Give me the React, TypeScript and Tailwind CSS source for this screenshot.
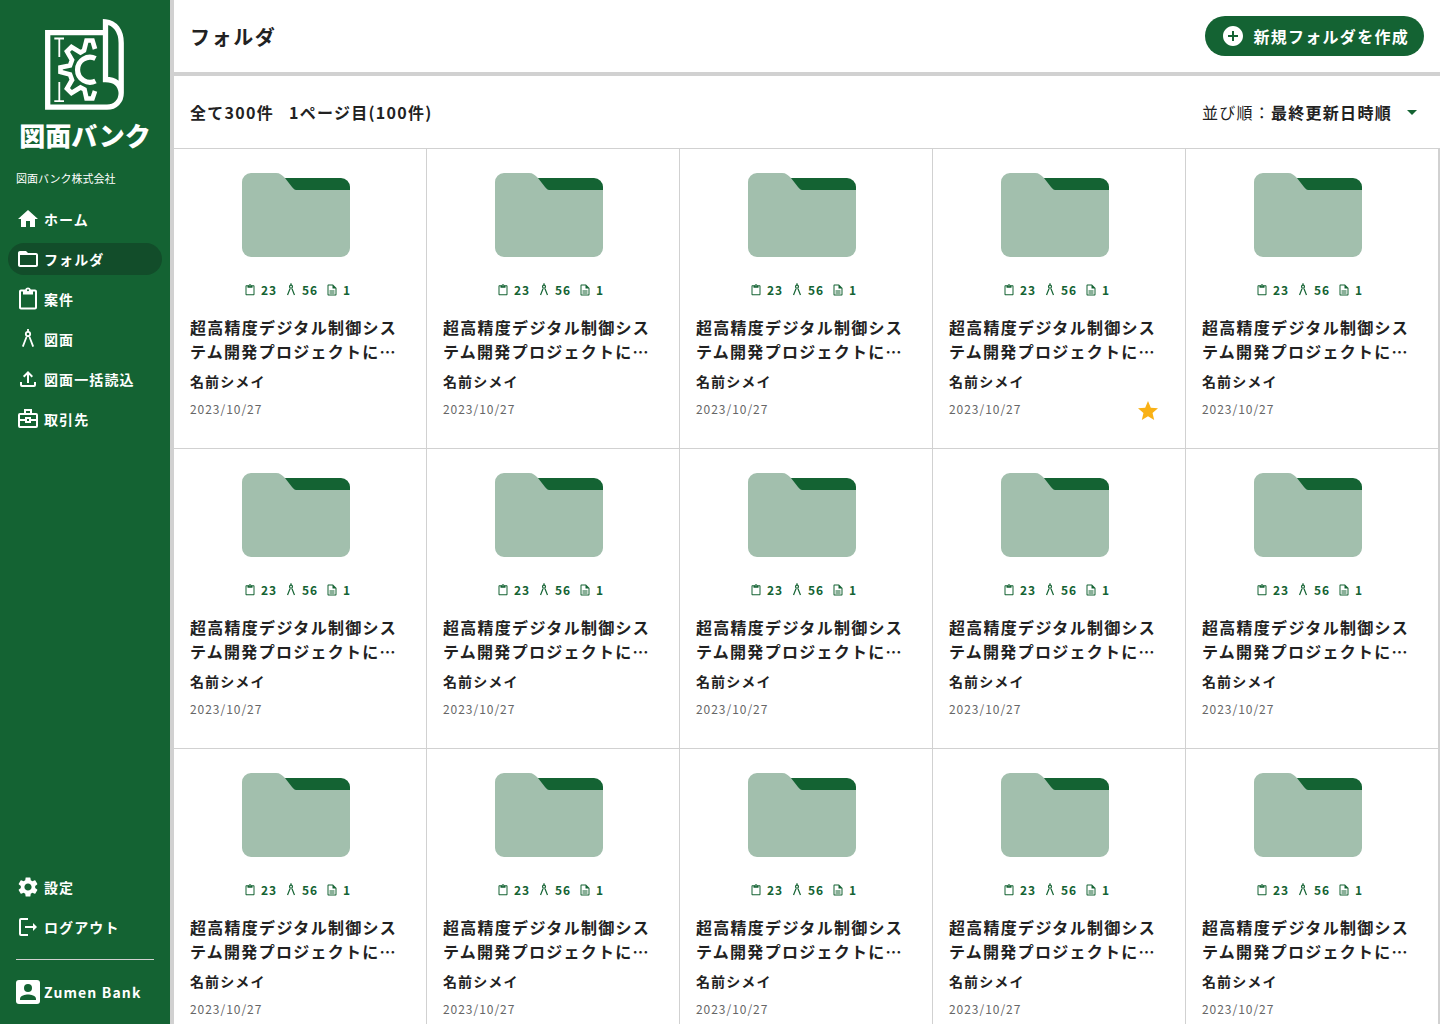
import type { ComponentType } from "react";
import { MdHome, MdSettings, MdAddCircle, MdArrowDropDown, MdStar } from "react-icons/md";

interface IconProps {
  className?: string;
}

function FolderIcon({ className }: IconProps) {
  return (
    <svg viewBox="0 0 24 24" fill="currentColor" className={className} aria-hidden="true">
      <path d="M10 4H4c-1.100 0-2 .9-2 2v12c0 1.100.9 2 2 2h16c1.100 0 2-.9 2-2V8c0-1.100-.9-2-2-2h-8l-2-2Zm10 14H4V8h16v10Z" />
    </svg>
  );
}

function ClipboardIcon({ className }: IconProps) {
  return (
    <svg viewBox="0 0 24 24" fill="currentColor" className={className} aria-hidden="true">
      <path d="M19 2.500h-4.180C14.400 1.300 13.300.5 12 .5s-2.400.8-2.820 2H5c-1.100 0-2 .9-2 2v16c0 1.100.9 2 2 2h14c1.100 0 2-.9 2-2v-16c0-1.100-.9-2-2-2Zm-7-.2a1 1 0 1 1 0 2 1 1 0 0 1 0-2ZM19 20.500H5v-16h2v3h10v-3h2v16Z" />
    </svg>
  );
}

function CompassIcon({ className }: IconProps) {
  return (
    <svg viewBox="0 0 24 24" fill="none" stroke="currentColor" strokeWidth="1.8" className={className} aria-hidden="true">
      <circle cx="12" cy="7" r="2.2" />
      <path d="M12 2v3M10.500 10 6.800 19.600M13.500 10l3.700 9.600" />
    </svg>
  );
}

function UploadIcon({ className }: IconProps) {
  return (
    <svg viewBox="0 0 24 24" fill="none" stroke="currentColor" strokeWidth="2" className={className} aria-hidden="true">
      <path d="M12 16V5.500M7.700 9.700 12 5.400l4.300 4.300" />
      <path d="M5 15v3a1 1 0 0 0 1 1h12a1 1 0 0 0 1-1v-3" />
    </svg>
  );
}

function DocumentIcon({ className }: IconProps) {
  return (
    <svg viewBox="0 0 24 24" fill="currentColor" className={className} aria-hidden="true">
      <path d="M14 1H5c-1.100 0-2 .9-2 2v18c0 1.100.9 2 2 2h14c1.100 0 2-.9 2-2V8l-7-7ZM5 21V3h8v6h6v12H5Zm2-8h10v2H7v-2Zm0 4h10v2H7v-2Z" />
    </svg>
  );
}

function BriefcaseIcon({ className }: IconProps) {
  return (
    <svg viewBox="0 0 24 24" fill="none" stroke="currentColor" strokeWidth="2" className={className} aria-hidden="true">
      <rect x="3" y="7" width="18" height="13" rx="1" />
      <path d="M9 7V3h6v4M3 13h7M14 13h7" />
      <rect x="10" y="11" width="4" height="4" />
    </svg>
  );
}

function LogoutIcon({ className }: IconProps) {
  return (
    <svg viewBox="0 0 24 24" fill="none" stroke="currentColor" strokeWidth="2" className={className} aria-hidden="true">
      <path d="M12 4H5a1 1 0 0 0-1 1v14a1 1 0 0 0 1 1h7M9 12h9" />
      <path d="M17 8l4 4-4 4z" fill="currentColor" stroke="none" />
    </svg>
  );
}

function AccountIcon({ className }: IconProps) {
  return (
    <svg viewBox="0 0 24 24" className={className} aria-hidden="true">
      <rect width="24" height="24" rx="3" fill="currentColor" />
      <circle cx="12" cy="8" r="4" fill="#146333" />
      <path d="M4 20v-1.300c0-2.700 5.300-4.100 8-4.100s8 1.400 8 4.100V20z" fill="#146333" />
    </svg>
  );
}

function FolderArt() {
  return (
    <svg viewBox="0 0 108 84" className="h-[84px] w-[108px]" aria-hidden="true">
      <path d="M36 5h63a9 9 0 0 1 9 9v12H36z" fill="#146333" />
      <path d="M9 0h25c4 0 6 2 9 5l7 9c2 2 2 3 5 3h53v58a9 9 0 0 1-9 9H9a9 9 0 0 1-9-9V9a9 9 0 0 1 9-9z" fill="#a2bfad" />
    </svg>
  );
}

function LogoMark() {
  return (
    <svg viewBox="45 18 81 93" className="h-[93px] w-[81px]" fill="none" stroke="#fff" aria-hidden="true">
      <path d="M105 32.700H47.700V107.200H107C115.500 107.200 121.200 101 121.200 93V43C121.200 31 115 22.500 105.500 21.800V79.500C115 79.500 120.500 84 121.200 93" strokeWidth="5.3" />
      <path d="M95 49 92.500 40.500H86.500L84 50.500 80.500 52.500 71.500 47 67 51.500 72 60 70 65.500 60.500 67.500V72L70 74.500 72 80 67 88.500 71.500 93 80.500 87.500 84.500 89.500 86.500 98.500H92.500L95 91" strokeWidth="4.700" />
      <path d="M95.500 58.500A12.500 12.500 0 1 0 95.500 81" strokeWidth="5.200" />
      <path d="M54.300 38.500H64M59.300 38.500V57M54.300 101.200H64M59.300 101.200V82" strokeWidth="1.8" />
    </svg>
  );
}

const mainNav = [
  { label: "ホーム", icon: MdHome },
  { label: "フォルダ", icon: FolderIcon, active: true },
  { label: "案件", icon: ClipboardIcon },
  { label: "図面", icon: CompassIcon },
  { label: "図面一括読込", icon: UploadIcon },
  { label: "取引先", icon: BriefcaseIcon },
];

const subNav = [
  { label: "設定", icon: MdSettings },
  { label: "ログアウト", icon: LogoutIcon },
];

const folders = Array.from({ length: 15 }, (_, i) => ({
  id: i,
  name: "超高精度デジタル制御システム開発プロジェクトに…",
  owner: "名前シメイ",
  date: "2023/10/27",
  projects: 23,
  drawings: 56,
  documents: 1,
  starred: i === 3,
}));

function NavItem({ label, icon: Icon, active }: { label: string; icon: ComponentType<IconProps>; active?: boolean }) {
  return (
    <a href="#" className={`flex h-8 items-center gap-1 rounded-full px-2 text-sm font-bold tracking-[0.08em] ${active ? "bg-[#124d2a]" : ""}`}>
      <Icon className="size-6 shrink-0" />
      {label}
    </a>
  );
}

function FolderCard({ folder }: { folder: (typeof folders)[number] }) {
  return (
    <a href="#" className="flex h-[300px] flex-col border-r border-b border-[#d1d1d1] pt-6 pr-[25px] pl-4">
      <div className="flex justify-center"><FolderArt /></div>
      <div className="mt-6 flex h-[18px] items-center justify-center gap-2 pl-1 text-xs font-bold tracking-[0.08em] text-[#146333]">
        <span className="flex items-center gap-[5px]"><ClipboardIcon className="size-3" />{folder.projects}</span>
        <span className="flex items-center gap-[5px]"><CompassIcon className="-mx-0.5 size-4" />{folder.drawings}</span>
        <span className="flex items-center gap-[5px]"><DocumentIcon className="size-3" />{folder.documents}</span>
      </div>
      <h2 className="mt-4 text-base leading-6 font-bold tracking-[0.08em]">{folder.name}</h2>
      <p className="mt-2 text-sm leading-5 font-bold tracking-[0.08em]">{folder.owner}</p>
      <div className="flex items-start justify-between">
        <time className="mt-2.5 text-xs tracking-[0.08em] text-[#666]">{folder.date}</time>
        {folder.starred && <MdStar className="mt-2 size-6 text-[#f9b115]" />}
      </div>
    </a>
  );
}

export default function App() {
  return (
    <div className="flex h-screen overflow-hidden bg-white font-['Noto_Sans_CJK_JP',sans-serif] text-[#222]">
      <aside className="flex w-[174px] shrink-0 flex-col border-r-4 border-[#d1d1d1] bg-[#146333] text-white">
        <div className="flex flex-col items-center pt-[18px]">
          <LogoMark />
          <p className="mt-1.5 text-[26px] leading-9 font-black">図面バンク</p>
        </div>
        <p className="px-4 pt-4 text-[11px] leading-[18px]">図面バンク株式会社</p>
        <nav className="mt-4 flex flex-col gap-2 px-2">
          {mainNav.map((item) => <NavItem key={item.label} {...item} />)}
        </nav>
        <nav className="mt-auto flex flex-col gap-2 px-2">
          {subNav.map((item) => <NavItem key={item.label} {...item} />)}
        </nav>
        <div className="mx-4 mt-4 flex items-center gap-1 border-t border-[#d1d1d1] py-5 text-sm font-bold tracking-[0.08em]">
          <AccountIcon className="size-6" />
          Zumen Bank
        </div>
      </aside>
      <main className="flex min-w-0 flex-1 flex-col">
        <header className="flex h-[76px] shrink-0 items-center justify-between border-b-4 border-[#d1d1d1] px-4">
          <h1 className="pt-0.5 text-xl font-bold tracking-[0.08em]">フォルダ</h1>
          <button className="flex h-10 items-center gap-2 rounded-full bg-[#146333] pr-[15px] pl-4 font-bold tracking-[0.08em] text-white">
            <MdAddCircle className="size-6" />
            新規フォルダを作成
          </button>
        </header>
        <div className="flex h-[73px] shrink-0 items-center justify-between border-b border-[#d1d1d1] px-4 tracking-[0.08em]">
          <p className="flex gap-[15px] font-bold">
            <span>全て300件</span>
            <span>1ページ目(100件)</span>
          </p>
          <div className="relative flex items-center">
            <label htmlFor="sort">並び順：</label>
            <select id="sort" className="appearance-none bg-transparent pr-8 font-bold tracking-[0.08em]">
              <option>最終更新日時順</option>
            </select>
            <MdArrowDropDown className="pointer-events-none absolute right-0 size-6 text-[#146333]" />
          </div>
        </div>
        <div className="grid min-h-0 flex-1 grid-cols-5 content-start overflow-y-auto border-r border-[#d1d1d1]">
          {folders.map((folder) => <FolderCard key={folder.id} folder={folder} />)}
        </div>
      </main>
    </div>
  );
}
